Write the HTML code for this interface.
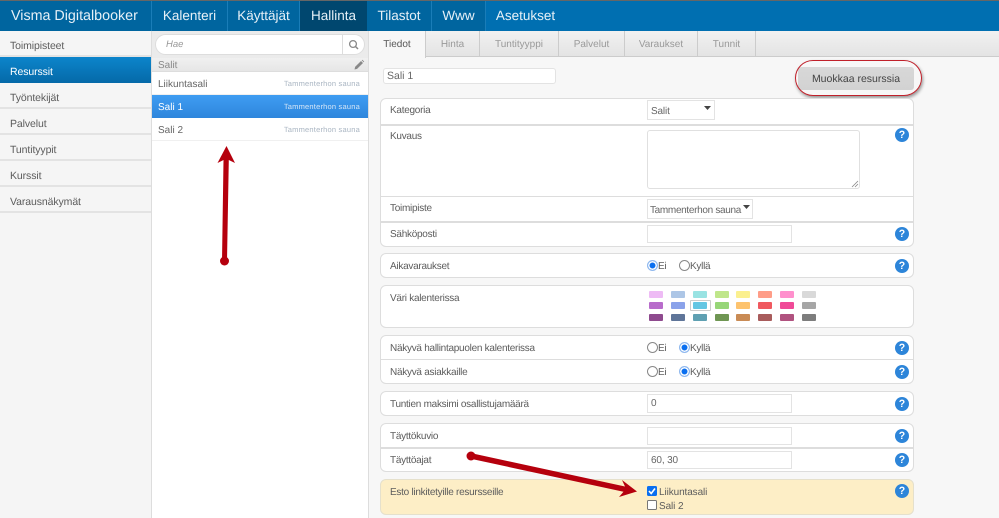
<!DOCTYPE html>
<html lang="fi"><head><meta charset="utf-8"><title>Visma Digitalbooker</title>
<style>
html,body{margin:0;padding:0;width:999px;height:518px;overflow:hidden;background:#f7f7f7;font-family:"Liberation Sans",sans-serif;color:#555;text-rendering:geometricPrecision}
div,span,input{box-sizing:border-box}
.a,.t{position:absolute}
.t{white-space:nowrap;font-size:10px;line-height:14px;letter-spacing:-.27px;margin-top:2px;color:#5c5c5c}
.nav{position:absolute;top:1px;height:30px;color:#e6f0f7;font-size:13.5px;line-height:30px;text-align:center;border-right:1px solid #1a7db8}
.side{position:absolute;left:0;width:151px;height:26px;border-bottom:2px solid #e3e3e3;padding-left:10px;font-size:10.5px;line-height:31px;letter-spacing:-.1px;color:#5c5c5c}
.tab{position:absolute;top:31px;height:26px;border-right:1px solid #ccc;text-align:center;line-height:28px;font-size:10px;color:#999}
.panel{position:absolute;left:380px;width:534px;background:#fff;border:1px solid #ddd;border-radius:6px}
.line{position:absolute;left:381px;width:532px;height:1px;background:#ddd}
.in{position:absolute;background:#fff;border:1px solid #e3e3e3;font-size:10px;letter-spacing:-.15px;line-height:17px;padding-left:3px;color:#666;white-space:nowrap}
.h{position:absolute;left:895px;width:14px;height:14px;border-radius:50%;background:#2d85d9;color:#fff;font-weight:bold;font-size:10.5px;line-height:14px;text-align:center}
.r{position:absolute;left:647px;width:11px;height:11px;border-radius:50%;border:1px solid #888;background:#fff}
.r.on{border:1px solid #8fb8ee;background:#0a6ff0;box-shadow:inset 0 0 0 1.5px #fff}
.sw{position:absolute;width:14px;height:7px;border-radius:1px}
.li{position:absolute;left:152px;width:216px;height:23px;background:#fff;border-bottom:1px solid #f0f0f0;font-size:10px;line-height:25px;padding-left:6px;color:#666}
.li span{position:absolute;right:8px;top:0;font-size:7.5px;line-height:24px;color:#a9b5c2;letter-spacing:.2px}
</style></head><body>
<div class="a" style="left:0;top:0;width:999px;height:1px;background:#666"></div>
<div class="a" style="left:0;top:1px;width:999px;height:30px;background:#006fb1"></div>
<div class="nav" style="left:0;width:152px;font-size:14.3px;text-align:left;padding-left:11px;background:#00659f">Visma Digitalbooker</div>
<div class="nav" style="left:152px;width:76px;background:#00659f">Kalenteri</div>
<div class="nav" style="left:228px;width:72px;background:#00659f">Käyttäjät</div>
<div class="nav" style="left:300px;width:67px;background:#00476f;border:0">Hallinta</div>
<div class="nav" style="left:367px;width:65px;background:#00659f">Tilastot</div>
<div class="nav" style="left:432px;width:54px;background:#00659f">Www</div>
<div class="nav" style="left:486px;width:79px;border:0">Asetukset</div>

<div class="a" style="left:0;top:31px;width:151px;height:487px;background:#f5f5f5"></div>
<div class="side" style="top:31px">Toimipisteet</div>
<div class="side" style="top:57px;background:linear-gradient(#0c85cb,#0569a8);color:#fff;border:0">Resurssit</div>
<div class="side" style="top:83px">Työntekijät</div>
<div class="side" style="top:109px">Palvelut</div>
<div class="side" style="top:135px">Tuntityypit</div>
<div class="side" style="top:161px">Kurssit</div>
<div class="side" style="top:187px">Varausnäkymät</div>

<div class="a" style="left:151px;top:31px;width:218px;height:487px;background:#fff;border-left:1px solid #ddd;border-right:1px solid #ddd"></div>
<div class="a" style="left:152px;top:31px;width:216px;height:27px;background:#ebebeb"></div>
<div class="a" style="left:155px;top:34px;width:210px;height:21px;background:#fff;border:1px solid #ddd;border-radius:11px"></div>
<div class="a" style="left:342px;top:35px;width:1px;height:19px;background:#ddd"></div>
<div class="t" style="left:166px;top:36px;font-style:italic;font-size:9.5px;color:#999;letter-spacing:0">Hae</div>
<svg class="a" style="left:347px;top:38px" width="13" height="13" viewBox="0 0 13 13"><circle cx="6" cy="6" r="3.4" fill="none" stroke="#888" stroke-width="1.3"/><path d="M8.5 8.5l2.5 2.5" stroke="#888" stroke-width="1.5"/></svg>
<div class="a" style="left:152px;top:58px;width:216px;height:14px;background:linear-gradient(#f0f0f0,#e6e6e6);border-bottom:1px solid #ddd"></div>
<div class="t" style="left:158px;top:57px;color:#888;letter-spacing:0">Salit</div>
<svg class="a" style="left:353px;top:59px" width="12" height="12" viewBox="0 0 12 12"><path d="M1.5 10.5l.6-2.6L8 2l2 2-5.900 5.900z" fill="#888"/><path d="M8.700 1.300l.7-.5 1.800 1.800-.5.700z" fill="#888"/></svg>
<div class="li" style="top:72px">Liikuntasali<span>Tammenterhon sauna</span></div>
<div class="li" style="top:95px;background:linear-gradient(#3f9df2,#2e86dc);color:#fff;border-bottom:0">Sali 1<span style="color:#d5e6f7">Tammenterhon sauna</span></div>
<div class="li" style="top:118px">Sali 2<span>Tammenterhon sauna</span></div>

<div class="a" style="left:369px;top:31px;width:630px;height:26px;background:linear-gradient(#f1f1f1,#e4e4e4);border-bottom:1px solid #ccc"></div>
<div class="tab" style="left:369px;width:57px;background:#f7f7f7;color:#555;height:27px">Tiedot</div>
<div class="tab" style="left:426px;width:54px">Hinta</div>
<div class="tab" style="left:480px;width:79px">Tuntityyppi</div>
<div class="tab" style="left:559px;width:66px">Palvelut</div>
<div class="tab" style="left:625px;width:73px">Varaukset</div>
<div class="tab" style="left:698px;width:58px">Tunnit</div>

<div class="in" style="left:383px;top:68px;width:173px;height:16px;line-height:14px;border-radius:3px;font-size:10.5px;letter-spacing:0">Sali 1</div>
<div class="a" style="left:798px;top:67px;width:116px;height:23px;background:linear-gradient(#d8d8d8,#d2d2d2);border-radius:3px;color:#444;font-size:10.5px;line-height:24px;text-align:center">Muokkaa resurssia</div>
<div class="a" style="left:795px;top:60px;width:127px;height:36px;border:1px solid #c0202a;border-radius:18px;box-shadow:1px 2px 3px rgba(0,0,0,.4)"></div>

<div class="panel" style="top:98px;height:149px"></div>
<div class="line" style="top:124px;height:2px"></div><div class="line" style="top:196px"></div><div class="line" style="top:221px;height:2px"></div>
<div class="t" style="left:390px;top:102px">Kategoria</div>
<div class="in" style="left:647px;top:100px;width:68px;height:20px;line-height:21px">Salit</div>
<svg class="a" style="left:704px;top:106px" width="8" height="5"><path d="M0 0h7L3.500 4z" fill="#444"/></svg>
<div class="t" style="left:390px;top:128px">Kuvaus</div>
<div class="a" style="left:647px;top:130px;width:213px;height:59px;background:#fff;border:1px solid #e0e0e0;border-radius:3px"></div>
<svg class="a" style="left:851px;top:180px" width="8" height="8"><path d="M1 7L7 1M4 7l3-3" stroke="#888" stroke-width=".8"/></svg>
<div class="t" style="left:390px;top:200px">Toimipiste</div>
<div class="in" style="left:647px;top:199px;width:106px;height:20px;line-height:21px;padding-left:2px;letter-spacing:-.32px">Tammenterhon sauna</div>
<svg class="a" style="left:743px;top:205px" width="8" height="5"><path d="M0 0h7L3.500 4z" fill="#444"/></svg>
<div class="t" style="left:390px;top:226px">Sähköposti</div>
<div class="in" style="left:647px;top:225px;width:145px;height:18px"></div>

<div class="panel" style="top:253px;height:25px"></div>
<div class="t" style="left:390px;top:258px">Aikavaraukset</div>
<div class="r on" style="top:260px"></div><div class="t" style="left:658px;top:258px">Ei</div>
<div class="r" style="left:679px;top:260px"></div><div class="t" style="left:690px;top:258px">Kyllä</div>

<div class="panel" style="top:285px;height:43px"></div>
<div class="t" style="left:390px;top:290px">Väri kalenterissa</div>
<div class="sw" style="left:649px;top:291px;background:#eebbf5"></div><div class="sw" style="left:671px;top:291px;background:#adc6e6"></div><div class="sw" style="left:693px;top:291px;background:#99e3e3"></div><div class="sw" style="left:715px;top:291px;background:#bfe68a"></div><div class="sw" style="left:736px;top:291px;background:#fbf08f"></div><div class="sw" style="left:758px;top:291px;background:#ff9d88"></div><div class="sw" style="left:780px;top:291px;background:#ff90cd"></div><div class="sw" style="left:802px;top:291px;background:#d9d9d9"></div>
<div class="a" style="left:690px;top:300px;width:21px;height:11px;border:1px solid #ccc;border-radius:1px"></div>
<div class="sw" style="left:649px;top:302px;background:#b86ccb"></div><div class="sw" style="left:671px;top:302px;background:#8aa2ea"></div><div class="sw" style="left:693px;top:302px;background:#64c6e3"></div><div class="sw" style="left:715px;top:302px;background:#97d678"></div><div class="sw" style="left:736px;top:302px;background:#fdc36e"></div><div class="sw" style="left:758px;top:302px;background:#f0595f"></div><div class="sw" style="left:780px;top:302px;background:#f04a98"></div><div class="sw" style="left:802px;top:302px;background:#a6a6a6"></div>
<div class="sw" style="left:649px;top:314px;background:#8e4a8e"></div><div class="sw" style="left:671px;top:314px;background:#5f7599"></div><div class="sw" style="left:693px;top:314px;background:#5fa0b2"></div><div class="sw" style="left:715px;top:314px;background:#6f9653"></div><div class="sw" style="left:736px;top:314px;background:#c98b55"></div><div class="sw" style="left:758px;top:314px;background:#a85c5c"></div><div class="sw" style="left:780px;top:314px;background:#b0527f"></div><div class="sw" style="left:802px;top:314px;background:#7d7d7d"></div>

<div class="panel" style="top:335px;height:49px"></div><div class="line" style="top:359px"></div>
<div class="t" style="left:390px;top:340px">Näkyvä hallintapuolen kalenterissa</div>
<div class="r" style="top:342px"></div><div class="t" style="left:658px;top:340px">Ei</div>
<div class="r on" style="left:679px;top:342px"></div><div class="t" style="left:690px;top:340px">Kyllä</div>
<div class="t" style="left:390px;top:364px">Näkyvä asiakkaille</div>
<div class="r" style="top:366px"></div><div class="t" style="left:658px;top:364px">Ei</div>
<div class="r on" style="left:679px;top:366px"></div><div class="t" style="left:690px;top:364px">Kyllä</div>

<div class="panel" style="top:391px;height:25px"></div>
<div class="t" style="left:390px;top:396px">Tuntien maksimi osallistujamäärä</div>
<div class="in" style="left:647px;top:394px;width:145px;height:19px">0</div>

<div class="panel" style="top:423px;height:49px"></div><div class="line" style="top:447px;height:2px"></div>
<div class="t" style="left:390px;top:428px">Täyttökuvio</div>
<div class="in" style="left:647px;top:427px;width:145px;height:18px"></div>
<div class="t" style="left:390px;top:452px">Täyttöajat</div>
<div class="in" style="left:647px;top:451px;width:145px;height:18px">60, 30</div>

<div class="panel" style="top:479px;height:36px;background:#fdeec6;border-color:#e5e0cc"></div>
<div class="t" style="left:390px;top:484px">Esto linkitetyille resursseille</div>
<svg class="a" style="left:647px;top:486px" width="10" height="10"><rect width="10" height="10" rx="1.500" fill="#0a6ff0"/><path d="M2 5l2.200 2.500L8 2.500" stroke="#fff" stroke-width="1.600" fill="none"/></svg>
<div class="t" style="left:659px;top:484px;letter-spacing:-.1px">Liikuntasali</div>
<div class="a" style="left:647px;top:500px;width:10px;height:10px;background:#fff;border:1px solid #777;border-radius:1.500px"></div>
<div class="t" style="left:659px;top:498px;letter-spacing:-.1px">Sali 2</div>

<div class="h" style="top:128px">?</div><div class="h" style="top:227px">?</div><div class="h" style="top:259px">?</div><div class="h" style="top:341px">?</div><div class="h" style="top:365px">?</div><div class="h" style="top:397px">?</div><div class="h" style="top:429px">?</div><div class="h" style="top:453px">?</div><div class="h" style="top:484px">?</div>

<svg class="a" style="left:0;top:0" width="999" height="518">
<g fill="#b5000d">
<path d="M222 261L223.500 160L217.500 163L226.500 146L235 163L228.800 160L227 261z"/><circle cx="224.500" cy="261" r="4.500"/>
<path d="M470.500 453L625 486.500L622 480L637 491.500L619 497L623.500 491.800L469.500 458.500z"/><circle cx="471" cy="456" r="4.500"/>
</g></svg>
</body></html>
